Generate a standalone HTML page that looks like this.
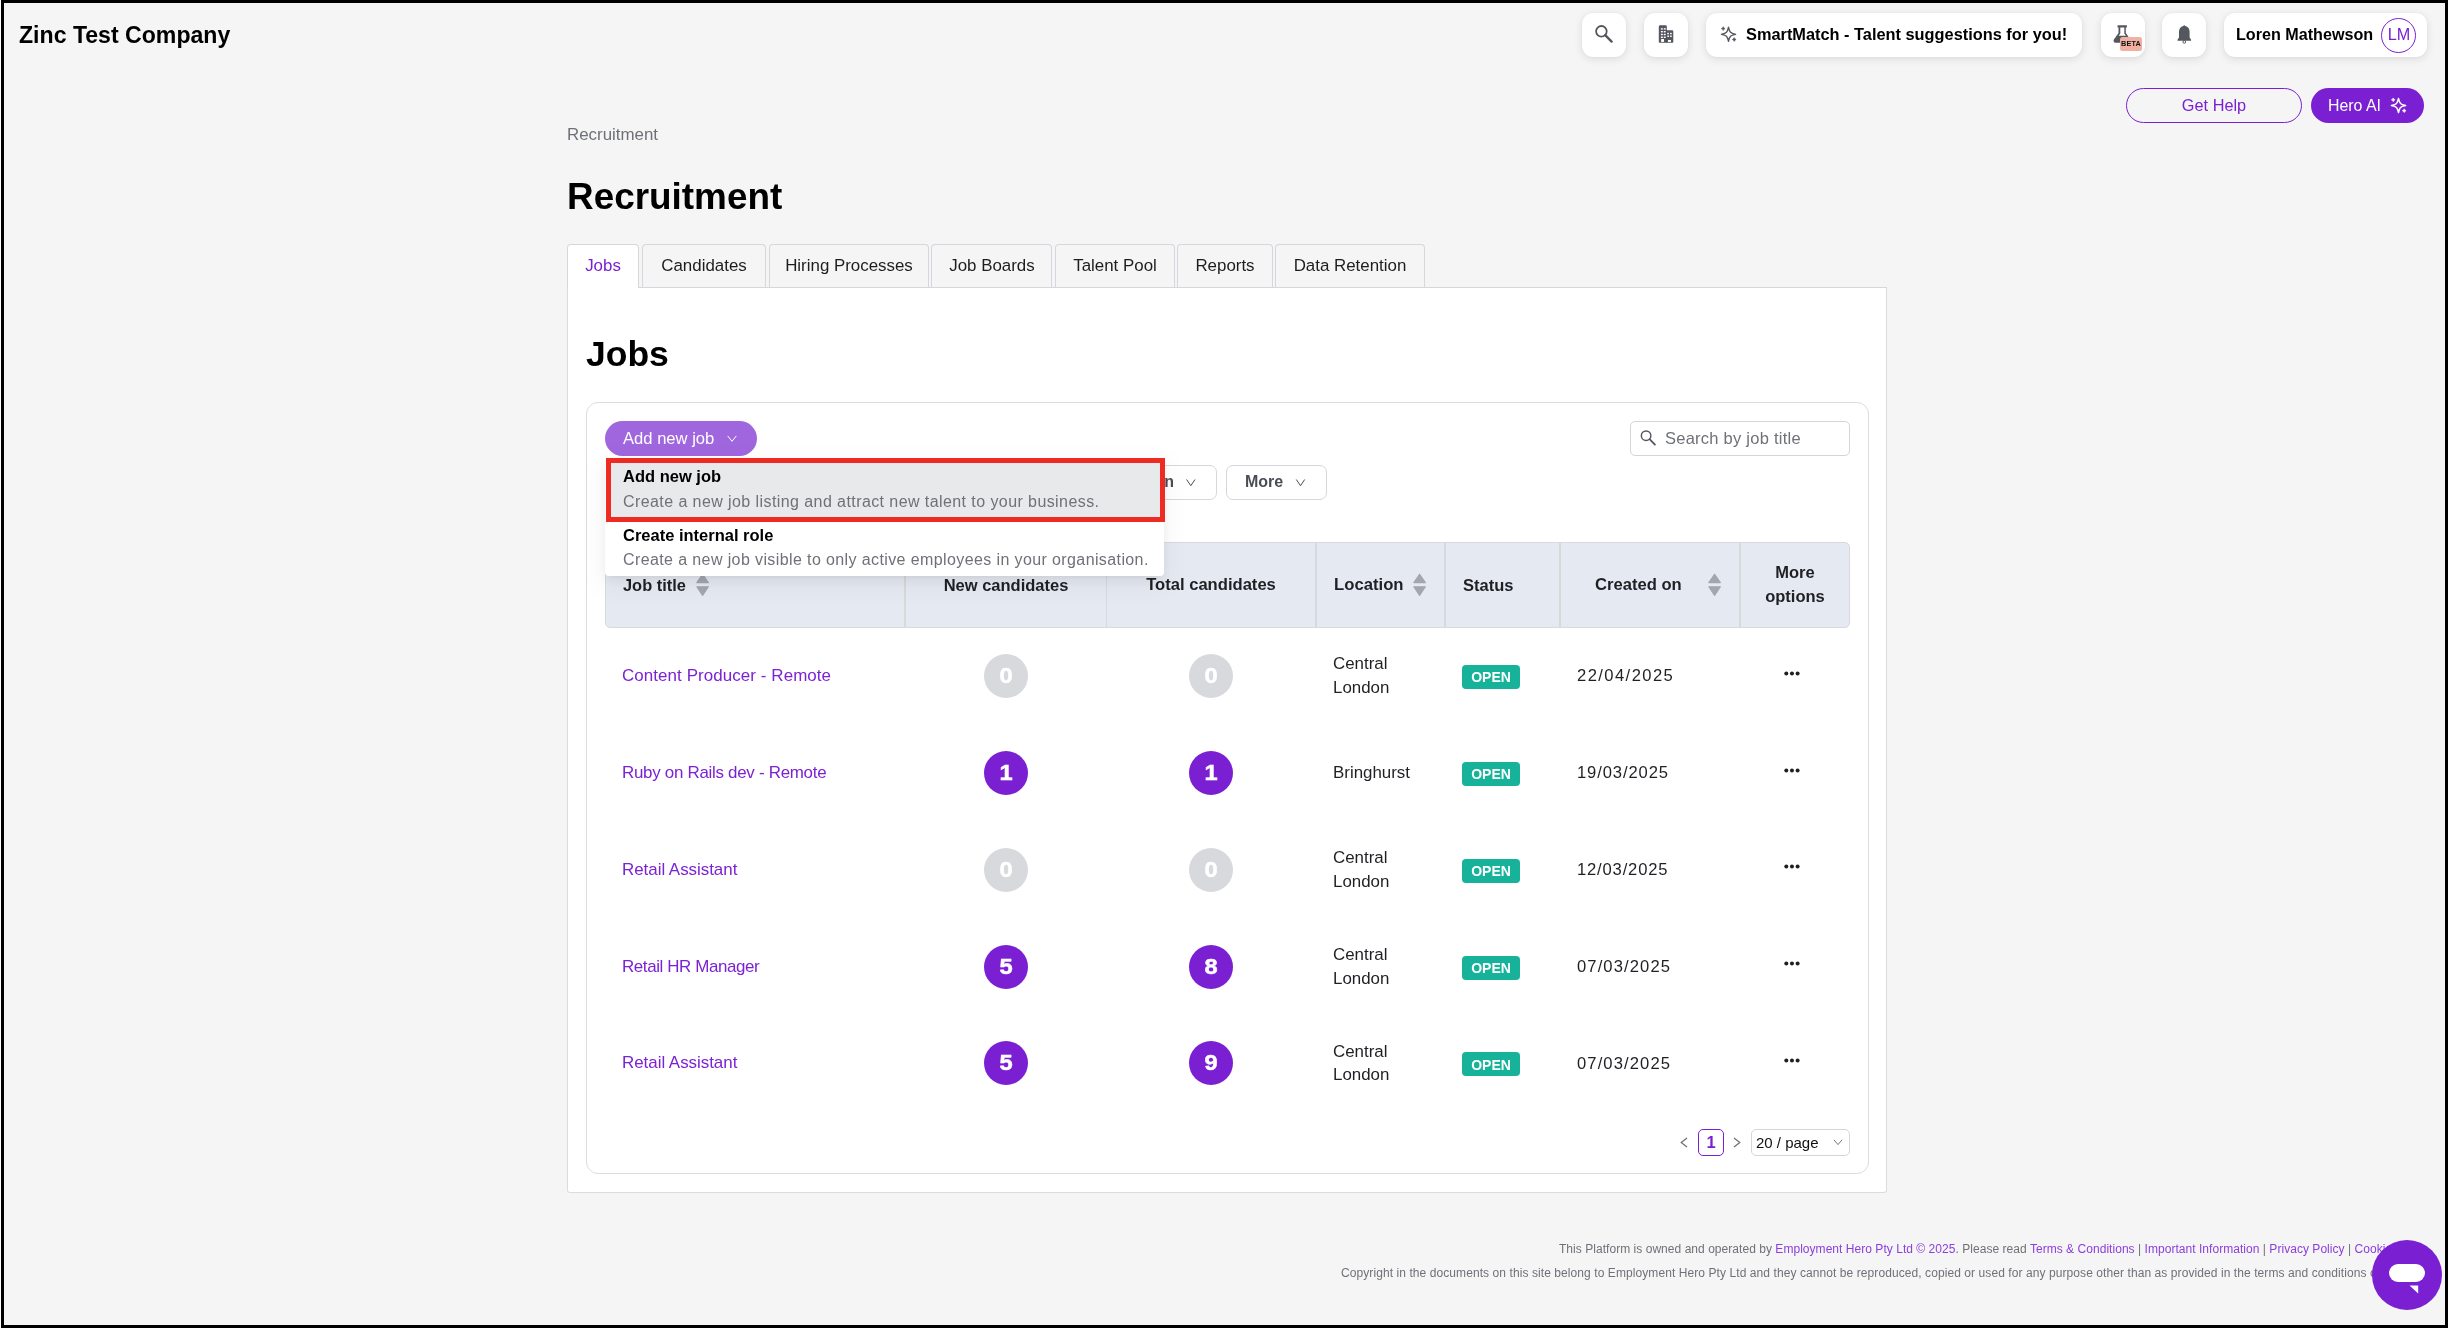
<!DOCTYPE html>
<html><head><meta charset="utf-8"><title>Recruitment</title>
<style>
html,body{margin:0;padding:0;}
body{width:2448px;height:1328px;position:relative;overflow:hidden;background:#f5f5f5;font-family:"Liberation Sans",sans-serif;color:#000;}
.a{position:absolute;box-sizing:border-box;}
.t{position:absolute;line-height:1;white-space:nowrap;will-change:transform;}
svg{position:absolute;overflow:visible;}
</style></head><body>

<div class="t" style="left:18.80px;top:24.26px;font-size:23.1px;font-weight:700;">Zinc Test Company</div>
<div class="a" style="left:1582px;top:13px;width:44px;height:44px;background:#fff;border-radius:11px;box-shadow:0 2px 8px rgba(0,0,0,0.11),0 0 2px rgba(0,0,0,0.05);"></div>
<div class="a" style="left:1644px;top:13px;width:44px;height:44px;background:#fff;border-radius:11px;box-shadow:0 2px 8px rgba(0,0,0,0.11),0 0 2px rgba(0,0,0,0.05);"></div>
<div class="a" style="left:1706px;top:13px;width:376px;height:44px;background:#fff;border-radius:11px;box-shadow:0 2px 8px rgba(0,0,0,0.11),0 0 2px rgba(0,0,0,0.05);"></div>
<div class="a" style="left:2101px;top:13px;width:44px;height:44px;background:#fff;border-radius:11px;box-shadow:0 2px 8px rgba(0,0,0,0.11),0 0 2px rgba(0,0,0,0.05);"></div>
<div class="a" style="left:2162px;top:13px;width:44px;height:44px;background:#fff;border-radius:11px;box-shadow:0 2px 8px rgba(0,0,0,0.11),0 0 2px rgba(0,0,0,0.05);"></div>
<div class="a" style="left:2224px;top:13px;width:203px;height:44px;background:#fff;border-radius:11px;box-shadow:0 2px 8px rgba(0,0,0,0.11),0 0 2px rgba(0,0,0,0.05);"></div>
<svg style="left:1582px;top:13px" width="44" height="44" viewBox="0 0 44 44"><circle cx="19.4" cy="18.3" r="5.3" fill="none" stroke="#54575e" stroke-width="1.8"/><line x1="23.2" y1="22.2" x2="29.6" y2="28.6" stroke="#54575e" stroke-width="2.4" stroke-linecap="round"/></svg>
<svg style="left:0;top:0" width="1" height="1"><path d="M1658.8 26.6a1.3 1.3 0 0 1 1.3-1.3h5.4a1.3 1.3 0 0 1 1.3 1.3v3.6h5.2a1.3 1.3 0 0 1 1.3 1.3v10.6a.6.6 0 0 1-.6.6h-13.3a.6.6 0 0 1-.6-.6z" fill="#54575e"/><g fill="#fff"><rect x="1660.9" y="28.2" width="1.9" height="1.4"/><rect x="1660.9" y="31.0" width="1.9" height="1.4"/><rect x="1660.9" y="33.8" width="1.9" height="1.4"/><rect x="1660.9" y="36.6" width="1.9" height="1.4"/><rect x="1663.8" y="28.2" width="1.9" height="1.4"/><rect x="1663.8" y="31.0" width="1.9" height="1.4"/><rect x="1663.8" y="33.8" width="1.9" height="1.4"/><rect x="1663.8" y="36.6" width="1.9" height="1.4"/><rect x="1667.3" y="32.8" width="1.6" height="1.5"/><rect x="1667.3" y="35.5" width="1.6" height="1.5"/><rect x="1670.1" y="32.8" width="1.6" height="1.5"/><rect x="1670.1" y="35.5" width="1.6" height="1.5"/><rect x="1661.1" y="39.0" width="2.9" height="2.9"/><rect x="1668.0" y="40.0" width="3.0" height="1.9"/></g><line x1="1666.5" y1="30.5" x2="1666.5" y2="42.7" stroke="#3f4248" stroke-width="0.4"/></svg>
<svg style="left:0;top:0" width="1" height="1"><path d="M1728.5 27.199999999999996 C1729.636 32.454 1730.346 33.163999999999994 1735.6 34.3 C1730.346 35.436 1729.636 36.145999999999994 1728.5 41.4 C1727.364 36.145999999999994 1726.654 35.436 1721.4 34.3 C1726.654 33.163999999999994 1727.364 32.454 1728.5 27.199999999999996Z" fill="none" stroke="#54575e" stroke-width="1.35" stroke-linejoin="round"/><path d="M1723.2 26.7 Q1723.6000000000001 28.2 1725.1000000000001 28.599999999999998 Q1723.6000000000001 28.999999999999996 1723.2 30.499999999999996 Q1722.8 28.999999999999996 1721.3 28.599999999999998 Q1722.8 28.2 1723.2 26.7ZM1734.2 37.6 Q1734.6000000000001 39.1 1736.1000000000001 39.5 Q1734.6000000000001 39.9 1734.2 41.4 Q1733.8 39.9 1732.3 39.5 Q1733.8 39.1 1734.2 37.6Z" fill="#54575e" stroke="#54575e" stroke-width="0.6" stroke-linejoin="round"/></svg>
<div class="t" style="left:1745.60px;top:26.00px;font-size:16.35px;font-weight:700;">SmartMatch - Talent suggestions for you!</div>
<svg style="left:0;top:0" width="1" height="1"><path d="M2117.6 25.3h9.3v2.1h-1.1v5.6l4.6 6.6c.9 1.4 0 3.2-1.7 3.2h-13.1c-1.7 0-2.6-1.8-1.7-3.2l4.6-6.6v-5.6h-1z" fill="#54575e"/><path d="M2120.3 27.4h4v6.1l1.6 2.3h-7.2l1.6-2.3z" fill="#fff"/></svg>
<div class="a" style="left:2120px;top:36.8px;width:22.3px;height:14px;background:#f0b0a2;border-radius:2.5px;"></div>
<div class="t" style="left:1631.40px;width:1000px;text-align:center;top:39.80px;font-size:7.3px;font-weight:700;color:#111;letter-spacing:0.12px;">BETA</div>
<svg style="left:0;top:0" width="1" height="1"><path d="M2184.3 25.3c.5 0 .8.3 1 .8 2.8.6 4.3 3 4.3 5.9v5.5l1.5 2.2v1.1h-13.6v-1.1l1.5-2.2v-5.5c0-2.9 1.5-5.3 4.3-5.9.2-.5.5-.8 1-.8z" fill="#54575e"/><circle cx="2184.3" cy="41.9" r="1.35" fill="none" stroke="#54575e" stroke-width="1"/></svg>
<div class="t" style="left:2235.60px;top:26.37px;font-size:16.15px;font-weight:700;">Loren Mathewson</div>
<div class="a" style="left:2381px;top:17.5px;width:35px;height:35px;border:1.3px solid #7a1fd2;border-radius:50%;"></div>
<div class="t" style="left:1898.80px;width:1000px;text-align:center;top:26.23px;font-size:16.2px;color:#7a1fd2;">LM</div>
<div class="a" style="left:2126px;top:88px;width:176px;height:35px;border:1.3px solid #7a1fd2;border-radius:18px;"></div>
<div class="t" style="left:1714.00px;width:1000px;text-align:center;top:97.34px;font-size:16.3px;color:#7a1fd2;">Get Help</div>
<div class="a" style="left:2311px;top:88px;width:113px;height:35px;background:#7a1fd2;border-radius:18px;"></div>
<div class="t" style="left:2328.20px;top:97.69px;font-size:15.9px;color:#fff;">Hero AI</div>
<svg style="left:0;top:0" width="1" height="1"><path d="M2398.5 98.4 C2399.636 103.654 2400.346 104.364 2405.6 105.5 C2400.346 106.636 2399.636 107.346 2398.5 112.6 C2397.364 107.346 2396.654 106.636 2391.4 105.5 C2396.654 104.364 2397.364 103.654 2398.5 98.4Z" fill="none" stroke="#fff" stroke-width="1.5" stroke-linejoin="round"/><path d="M2393.2 97.89999999999999 Q2393.6 99.39999999999999 2395.1 99.8 Q2393.6 100.2 2393.2 101.7 Q2392.7999999999997 100.2 2391.2999999999997 99.8 Q2392.7999999999997 99.39999999999999 2393.2 97.89999999999999ZM2404.2 108.8 Q2404.6 110.3 2406.1 110.7 Q2404.6 111.10000000000001 2404.2 112.60000000000001 Q2403.7999999999997 111.10000000000001 2402.2999999999997 110.7 Q2403.7999999999997 110.3 2404.2 108.8Z" fill="#fff" stroke="#fff" stroke-width="0.6" stroke-linejoin="round"/></svg>
<div class="t" style="left:567.00px;top:126.64px;font-size:16.9px;color:#6f7178;">Recruitment</div>
<div class="t" style="left:566.80px;top:178.83px;font-size:36.9px;font-weight:700;">Recruitment</div>
<div class="a" style="left:567px;top:287px;width:1320px;height:906px;background:#fff;border:1px solid #dcdce0;border-top:none;border-radius:0 0 3px 3px;"></div>
<div class="a" style="left:639px;top:286.5px;width:1248px;height:1px;background:#d6d7dc;"></div>
<div class="a" style="left:567px;top:244px;width:72px;height:44px;background:#fff;border:1px solid #d6d7dc;border-bottom:none;border-radius:4px 4px 0 0;"></div>
<div class="t" style="left:103.00px;width:1000px;text-align:center;top:257.83px;font-size:16.9px;color:#7a1fd2;">Jobs</div>
<div class="a" style="left:642px;top:244px;width:124px;height:43px;background:#f5f5f5;border:1px solid #d6d7dc;border-bottom:none;border-radius:4px 4px 0 0;"></div>
<div class="t" style="left:204.00px;width:1000px;text-align:center;top:257.83px;font-size:16.9px;color:#1d1d1f;">Candidates</div>
<div class="a" style="left:769px;top:244px;width:160px;height:43px;background:#f5f5f5;border:1px solid #d6d7dc;border-bottom:none;border-radius:4px 4px 0 0;"></div>
<div class="t" style="left:349.00px;width:1000px;text-align:center;top:257.83px;font-size:16.9px;color:#1d1d1f;">Hiring Processes</div>
<div class="a" style="left:931px;top:244px;width:121px;height:43px;background:#f5f5f5;border:1px solid #d6d7dc;border-bottom:none;border-radius:4px 4px 0 0;"></div>
<div class="t" style="left:491.50px;width:1000px;text-align:center;top:257.83px;font-size:16.9px;color:#1d1d1f;">Job Boards</div>
<div class="a" style="left:1055px;top:244px;width:120px;height:43px;background:#f5f5f5;border:1px solid #d6d7dc;border-bottom:none;border-radius:4px 4px 0 0;"></div>
<div class="t" style="left:615.00px;width:1000px;text-align:center;top:257.83px;font-size:16.9px;color:#1d1d1f;">Talent Pool</div>
<div class="a" style="left:1177px;top:244px;width:96px;height:43px;background:#f5f5f5;border:1px solid #d6d7dc;border-bottom:none;border-radius:4px 4px 0 0;"></div>
<div class="t" style="left:725.00px;width:1000px;text-align:center;top:257.83px;font-size:16.9px;color:#1d1d1f;">Reports</div>
<div class="a" style="left:1275px;top:244px;width:150px;height:43px;background:#f5f5f5;border:1px solid #d6d7dc;border-bottom:none;border-radius:4px 4px 0 0;"></div>
<div class="t" style="left:850.00px;width:1000px;text-align:center;top:257.83px;font-size:16.9px;color:#1d1d1f;">Data Retention</div>
<div class="t" style="left:585.60px;top:336.82px;font-size:35.5px;font-weight:700;">Jobs</div>
<div class="a" style="left:586px;top:402px;width:1283px;height:772px;background:#fff;border:1px solid #dcdde1;border-radius:12px;"></div>
<div class="a" style="left:605px;top:421px;width:152px;height:35px;background:#a066de;border-radius:18px;"></div>
<div class="t" style="left:622.60px;top:431.29px;font-size:16.6px;color:#fff;">Add new job</div>
<svg style="left:0;top:0" width="1" height="1"><path d="M727.7 435.90000000000003 L732 441.3 L736.3 435.90000000000003" fill="none" stroke="#fff" stroke-width="1.0"/></svg>
<div class="a" style="left:1630px;top:421px;width:219.5px;height:35px;background:#fff;border:1px solid #d3d5da;border-radius:5px;"></div>
<svg style="left:1630px;top:421px" width="30" height="35" viewBox="0 0 30 35"><circle cx="16.1" cy="14.7" r="4.75" fill="none" stroke="#54575e" stroke-width="1.45"/><line x1="19.6" y1="18.2" x2="24.9" y2="23.7" stroke="#54575e" stroke-width="1.8" stroke-linecap="round"/></svg>
<div class="t" style="left:1664.50px;top:430.18px;font-size:16.5px;color:#6f7178;letter-spacing:0.25px;">Search by job title</div>
<div class="a" style="left:1080px;top:465px;width:136.6px;height:34.5px;background:#fff;border:1px solid #d6d7dc;border-radius:7px;"></div>
<div class="t" style="left:174.20px;width:1000px;text-align:right;top:473.90px;font-size:16.0px;font-weight:700;color:#4a4d55;">Location</div>
<svg style="left:0;top:0" width="1" height="1"><path d="M1186.6 479.5 L1190.8 485.70000000000005 L1195.0 479.5" fill="none" stroke="#4a4d55" stroke-width="1.0"/></svg>
<div class="a" style="left:1226px;top:465px;width:101px;height:34.5px;background:#fff;border:1px solid #d6d7dc;border-radius:7px;"></div>
<div class="t" style="left:1244.80px;top:473.90px;font-size:16.0px;font-weight:700;color:#4a4d55;">More</div>
<svg style="left:0;top:0" width="1" height="1"><path d="M1296.3 479.5 L1300.5 485.70000000000005 L1304.7 479.5" fill="none" stroke="#4a4d55" stroke-width="1.0"/></svg>
<div class="a" style="left:605px;top:542px;width:1245px;height:86px;background:#e5e9f1;border:1px solid #d9dadd;border-radius:5px;"></div>
<div class="a" style="left:904.0px;top:542.5px;width:1.6px;height:85px;background:#d8d9dc;"></div>
<div class="a" style="left:1105.8px;top:542.5px;width:1.6px;height:85px;background:#d8d9dc;"></div>
<div class="a" style="left:1315.3px;top:542.5px;width:1.6px;height:85px;background:#d8d9dc;"></div>
<div class="a" style="left:1444.2px;top:542.5px;width:1.6px;height:85px;background:#d8d9dc;"></div>
<div class="a" style="left:1559.2px;top:542.5px;width:1.6px;height:85px;background:#d8d9dc;"></div>
<div class="a" style="left:1739.2px;top:542.5px;width:1.6px;height:85px;background:#d8d9dc;"></div>
<div class="t" style="left:622.80px;top:576.86px;font-size:16.4px;font-weight:700;color:#1f2024;">Job title</div>
<svg style="left:695.6px;top:573.2px" width="14" height="24" viewBox="0 0 14 24"><path d="M6.6 1.2 12.4 9.6H0.8z" fill="#a3a6ae" stroke="#a3a6ae" stroke-width="1.1" stroke-linejoin="round"/><path d="M6.6 22.4 12.4 13.8H0.8z" fill="#a3a6ae" stroke="#a3a6ae" stroke-width="1.1" stroke-linejoin="round"/></svg>
<div class="t" style="left:505.70px;width:1000px;text-align:center;top:576.77px;font-size:16.5px;font-weight:700;color:#1f2024;">New candidates</div>
<div class="t" style="left:711.00px;width:1000px;text-align:center;top:576.69px;font-size:16.6px;font-weight:700;color:#1f2024;">Total candidates</div>
<div class="t" style="left:1333.80px;top:576.60px;font-size:16.7px;font-weight:700;color:#1f2024;">Location</div>
<svg style="left:1412.8px;top:573.2px" width="14" height="24" viewBox="0 0 14 24"><path d="M6.6 1.2 12.4 9.6H0.8z" fill="#a3a6ae" stroke="#a3a6ae" stroke-width="1.1" stroke-linejoin="round"/><path d="M6.6 22.4 12.4 13.8H0.8z" fill="#a3a6ae" stroke="#a3a6ae" stroke-width="1.1" stroke-linejoin="round"/></svg>
<div class="t" style="left:1462.80px;top:576.77px;font-size:16.5px;font-weight:700;color:#1f2024;">Status</div>
<div class="t" style="left:1594.80px;top:576.69px;font-size:16.6px;font-weight:700;color:#1f2024;">Created on</div>
<svg style="left:1708.2px;top:573.2px" width="14" height="24" viewBox="0 0 14 24"><path d="M6.6 1.2 12.4 9.6H0.8z" fill="#a3a6ae" stroke="#a3a6ae" stroke-width="1.1" stroke-linejoin="round"/><path d="M6.6 22.4 12.4 13.8H0.8z" fill="#a3a6ae" stroke="#a3a6ae" stroke-width="1.1" stroke-linejoin="round"/></svg>
<div class="t" style="left:1295.30px;width:1000px;text-align:center;top:563.98px;font-size:16.5px;font-weight:700;color:#1f2024;">More</div>
<div class="t" style="left:1295.30px;width:1000px;text-align:center;top:587.98px;font-size:16.5px;font-weight:700;color:#1f2024;">options</div>
<div class="t" style="left:621.80px;top:668.39px;font-size:16.95px;color:#7b22d4;letter-spacing:0.08px;">Content Producer - Remote</div>
<div class="a" style="left:984px;top:654.2px;width:44px;height:44px;border-radius:50%;background:#d8d9dc;"></div>
<div class="t" style="left:505.70px;width:1000px;text-align:center;top:666.13px;font-size:21.5px;font-weight:700;color:#fff;-webkit-text-stroke:0.5px #fff;transform:scaleX(1.1);">0</div>
<div class="a" style="left:1189px;top:654.2px;width:44px;height:44px;border-radius:50%;background:#d8d9dc;"></div>
<div class="t" style="left:710.70px;width:1000px;text-align:center;top:666.13px;font-size:21.5px;font-weight:700;color:#fff;-webkit-text-stroke:0.5px #fff;transform:scaleX(1.1);">0</div>
<div class="t" style="left:1333.00px;top:656.44px;font-size:16.9px;color:#1f2024;">Central</div>
<div class="t" style="left:1333.00px;top:680.13px;font-size:16.9px;color:#1f2024;">London</div>
<div class="a" style="left:1462px;top:665.3px;width:58px;height:24px;background:#16b29a;border-radius:4px;"></div>
<div class="t" style="left:991.00px;width:1000px;text-align:center;top:670.40px;font-size:14.0px;font-weight:700;color:#fff;">OPEN</div>
<div class="t" style="left:1577.40px;top:668.49px;font-size:16.6px;color:#1f2024;letter-spacing:1.42px;">22/04/2025</div>
<svg style="left:1782px;top:670.8px" width="20" height="10" viewBox="0 0 20 10"><circle cx="4.3" cy="2.4" r="2.0" fill="#1f2024"/><circle cx="9.95" cy="2.4" r="2.0" fill="#1f2024"/><circle cx="15.6" cy="2.4" r="2.0" fill="#1f2024"/></svg>
<div class="t" style="left:621.80px;top:765.19px;font-size:16.95px;color:#7b22d4;letter-spacing:-0.29px;">Ruby on Rails dev - Remote</div>
<div class="a" style="left:984px;top:751.0px;width:44px;height:44px;border-radius:50%;background:#7a1fd2;"></div>
<div class="t" style="left:505.70px;width:1000px;text-align:center;top:762.93px;font-size:21.5px;font-weight:700;color:#fff;-webkit-text-stroke:0.5px #fff;transform:scaleX(1.1);">1</div>
<div class="a" style="left:1189px;top:751.0px;width:44px;height:44px;border-radius:50%;background:#7a1fd2;"></div>
<div class="t" style="left:710.70px;width:1000px;text-align:center;top:762.93px;font-size:21.5px;font-weight:700;color:#fff;-webkit-text-stroke:0.5px #fff;transform:scaleX(1.1);">1</div>
<div class="t" style="left:1333.00px;top:765.24px;font-size:16.9px;color:#1f2024;">Bringhurst</div>
<div class="a" style="left:1462px;top:762.1px;width:58px;height:24px;background:#16b29a;border-radius:4px;"></div>
<div class="t" style="left:991.00px;width:1000px;text-align:center;top:767.20px;font-size:14.0px;font-weight:700;color:#fff;">OPEN</div>
<div class="t" style="left:1577.40px;top:765.29px;font-size:16.6px;color:#1f2024;letter-spacing:0.89px;">19/03/2025</div>
<svg style="left:1782px;top:767.6px" width="20" height="10" viewBox="0 0 20 10"><circle cx="4.3" cy="2.4" r="2.0" fill="#1f2024"/><circle cx="9.95" cy="2.4" r="2.0" fill="#1f2024"/><circle cx="15.6" cy="2.4" r="2.0" fill="#1f2024"/></svg>
<div class="t" style="left:621.80px;top:861.99px;font-size:16.95px;color:#7b22d4;letter-spacing:-0.03px;">Retail Assistant</div>
<div class="a" style="left:984px;top:847.8px;width:44px;height:44px;border-radius:50%;background:#d8d9dc;"></div>
<div class="t" style="left:505.70px;width:1000px;text-align:center;top:859.73px;font-size:21.5px;font-weight:700;color:#fff;-webkit-text-stroke:0.5px #fff;transform:scaleX(1.1);">0</div>
<div class="a" style="left:1189px;top:847.8px;width:44px;height:44px;border-radius:50%;background:#d8d9dc;"></div>
<div class="t" style="left:710.70px;width:1000px;text-align:center;top:859.73px;font-size:21.5px;font-weight:700;color:#fff;-webkit-text-stroke:0.5px #fff;transform:scaleX(1.1);">0</div>
<div class="t" style="left:1333.00px;top:850.03px;font-size:16.9px;color:#1f2024;">Central</div>
<div class="t" style="left:1333.00px;top:873.73px;font-size:16.9px;color:#1f2024;">London</div>
<div class="a" style="left:1462px;top:858.9px;width:58px;height:24px;background:#16b29a;border-radius:4px;"></div>
<div class="t" style="left:991.00px;width:1000px;text-align:center;top:864.00px;font-size:14.0px;font-weight:700;color:#fff;">OPEN</div>
<div class="t" style="left:1577.40px;top:862.09px;font-size:16.6px;color:#1f2024;letter-spacing:0.83px;">12/03/2025</div>
<svg style="left:1782px;top:864.4px" width="20" height="10" viewBox="0 0 20 10"><circle cx="4.3" cy="2.4" r="2.0" fill="#1f2024"/><circle cx="9.95" cy="2.4" r="2.0" fill="#1f2024"/><circle cx="15.6" cy="2.4" r="2.0" fill="#1f2024"/></svg>
<div class="t" style="left:621.80px;top:958.99px;font-size:16.95px;color:#7b22d4;letter-spacing:-0.4px;">Retail HR Manager</div>
<div class="a" style="left:984px;top:944.8px;width:44px;height:44px;border-radius:50%;background:#7a1fd2;"></div>
<div class="t" style="left:505.70px;width:1000px;text-align:center;top:956.73px;font-size:21.5px;font-weight:700;color:#fff;-webkit-text-stroke:0.5px #fff;transform:scaleX(1.1);">5</div>
<div class="a" style="left:1189px;top:944.8px;width:44px;height:44px;border-radius:50%;background:#7a1fd2;"></div>
<div class="t" style="left:710.70px;width:1000px;text-align:center;top:956.73px;font-size:21.5px;font-weight:700;color:#fff;-webkit-text-stroke:0.5px #fff;transform:scaleX(1.1);">8</div>
<div class="t" style="left:1333.00px;top:947.03px;font-size:16.9px;color:#1f2024;">Central</div>
<div class="t" style="left:1333.00px;top:970.73px;font-size:16.9px;color:#1f2024;">London</div>
<div class="a" style="left:1462px;top:955.9px;width:58px;height:24px;background:#16b29a;border-radius:4px;"></div>
<div class="t" style="left:991.00px;width:1000px;text-align:center;top:961.00px;font-size:14.0px;font-weight:700;color:#fff;">OPEN</div>
<div class="t" style="left:1577.40px;top:959.09px;font-size:16.6px;color:#1f2024;letter-spacing:1.1px;">07/03/2025</div>
<svg style="left:1782px;top:961.4px" width="20" height="10" viewBox="0 0 20 10"><circle cx="4.3" cy="2.4" r="2.0" fill="#1f2024"/><circle cx="9.95" cy="2.4" r="2.0" fill="#1f2024"/><circle cx="15.6" cy="2.4" r="2.0" fill="#1f2024"/></svg>
<div class="t" style="left:621.80px;top:1055.49px;font-size:16.95px;color:#7b22d4;letter-spacing:-0.03px;">Retail Assistant</div>
<div class="a" style="left:984px;top:1041.3px;width:44px;height:44px;border-radius:50%;background:#7a1fd2;"></div>
<div class="t" style="left:505.70px;width:1000px;text-align:center;top:1053.22px;font-size:21.5px;font-weight:700;color:#fff;-webkit-text-stroke:0.5px #fff;transform:scaleX(1.1);">5</div>
<div class="a" style="left:1189px;top:1041.3px;width:44px;height:44px;border-radius:50%;background:#7a1fd2;"></div>
<div class="t" style="left:710.70px;width:1000px;text-align:center;top:1053.22px;font-size:21.5px;font-weight:700;color:#fff;-webkit-text-stroke:0.5px #fff;transform:scaleX(1.1);">9</div>
<div class="t" style="left:1333.00px;top:1043.53px;font-size:16.9px;color:#1f2024;">Central</div>
<div class="t" style="left:1333.00px;top:1067.23px;font-size:16.9px;color:#1f2024;">London</div>
<div class="a" style="left:1462px;top:1052.4px;width:58px;height:24px;background:#16b29a;border-radius:4px;"></div>
<div class="t" style="left:991.00px;width:1000px;text-align:center;top:1057.50px;font-size:14.0px;font-weight:700;color:#fff;">OPEN</div>
<div class="t" style="left:1577.40px;top:1055.59px;font-size:16.6px;color:#1f2024;letter-spacing:1.1px;">07/03/2025</div>
<svg style="left:1782px;top:1057.9px" width="20" height="10" viewBox="0 0 20 10"><circle cx="4.3" cy="2.4" r="2.0" fill="#1f2024"/><circle cx="9.95" cy="2.4" r="2.0" fill="#1f2024"/><circle cx="15.6" cy="2.4" r="2.0" fill="#1f2024"/></svg>
<svg style="left:1678px;top:1136px" width="12" height="14" viewBox="0 0 12 14"><path d="M9 2 3.2 6.5 9 11" fill="none" stroke="#6b6e76" stroke-width="1.2"/></svg>
<div class="a" style="left:1698px;top:1129px;width:26px;height:27px;background:#fff;border:1.3px solid #7a1fd2;border-radius:5px;"></div>
<div class="t" style="left:1211.00px;width:1000px;text-align:center;top:1134.47px;font-size:16.5px;font-weight:700;color:#7a1fd2;">1</div>
<svg style="left:1731px;top:1136px" width="12" height="14" viewBox="0 0 12 14"><path d="M3 2 8.8 6.5 3 11" fill="none" stroke="#6b6e76" stroke-width="1.2"/></svg>
<div class="a" style="left:1750.5px;top:1129px;width:99px;height:27px;background:#fff;border:1px solid #d3d5da;border-radius:5px;"></div>
<div class="t" style="left:1756.00px;top:1135.25px;font-size:15.0px;color:#111;">20 / page</div>
<svg style="left:0;top:0" width="1" height="1"><path d="M1833.9 1139.8 L1838 1144.6000000000001 L1842.1 1139.8" fill="none" stroke="#6b6e76" stroke-width="0.95"/></svg>
<div class="a" style="left:605px;top:458px;width:559px;height:118px;background:#fff;border-radius:0 0 4px 4px;box-shadow:0 5px 12px rgba(0,0,0,0.06),0 3px 6px -4px rgba(0,0,0,0.10),0 8px 24px 6px rgba(0,0,0,0.035);"></div>
<div class="a" style="left:605.5px;top:458px;width:559px;height:63.5px;background:#e8e9eb;border:5px solid #ee2a22;"></div>
<div class="t" style="left:622.80px;top:468.18px;font-size:16.5px;font-weight:700;">Add new job</div>
<div class="t" style="left:622.80px;top:494.30px;font-size:16.0px;color:#6f7178;letter-spacing:0.42px;">Create a new job listing and attract new talent to your business.</div>
<div class="t" style="left:622.80px;top:527.18px;font-size:16.5px;font-weight:700;">Create internal role</div>
<div class="t" style="left:622.80px;top:551.60px;font-size:16.0px;color:#6f7178;letter-spacing:0.39px;">Create a new job visible to only active employees in your organisation.</div>
<div class="t" style="left:1558.60px;top:1243.40px;font-size:12.0px;color:#6f7178;letter-spacing:0.04px;width:846px;height:18px;overflow:hidden;">This Platform is owned and operated by <span style="color:#8b3fdc">Employment Hero Pty Ltd © 2025</span>. Please read <span style="color:#8b3fdc">Terms &amp; Conditions</span> | <span style="color:#8b3fdc">Important Information</span> | <span style="color:#8b3fdc">Privacy Policy</span> | <span style="color:#8b3fdc">Cookie Policy</span></div>
<div class="t" style="left:1341.00px;top:1267.00px;font-size:12.0px;color:#6f7178;letter-spacing:0.08px;width:1064px;height:18px;overflow:hidden;">Copyright in the documents on this site belong to Employment Hero Pty Ltd and they cannot be reproduced, copied or used for any purpose other than as provided in the terms and conditions of this platform.</div>
<div class="a" style="left:2372px;top:1240px;width:70px;height:70px;background:#7a1fd2;border-radius:50%;"></div>
<div class="a" style="left:2388.7px;top:1264px;width:36.5px;height:18.2px;background:#fff;border-radius:9px;"></div>
<svg style="left:2408px;top:1282px" width="12" height="12" viewBox="0 0 12 12"><path d="M1.5 3.5 10.2 3.5 10.2 11.4z" fill="#fff"/></svg>
<div class="a" style="left:0px;top:0px;width:2448px;height:1328px;border-top:3px solid #000;border-left:4px solid #000;border-right:3px solid #000;border-bottom:3px solid #000;pointer-events:none;"></div>
<div class="a" style="left:0px;top:0px;width:1px;height:1328px;background:#fff;"></div>
</body></html>
